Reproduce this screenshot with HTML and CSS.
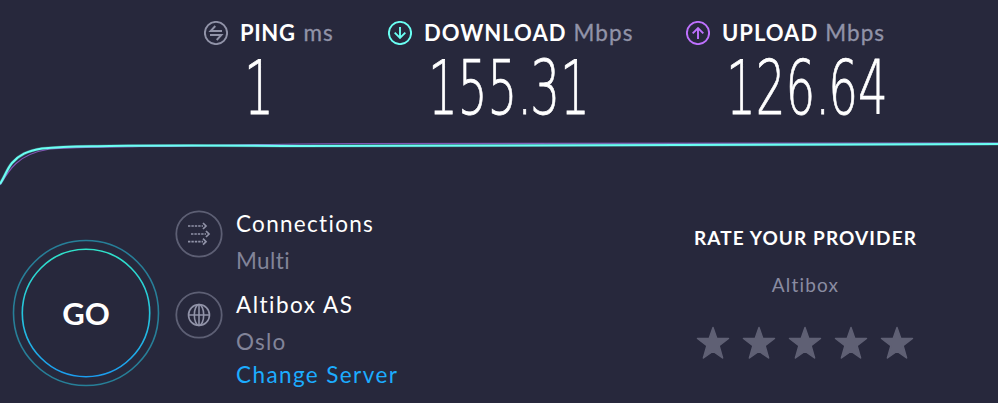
FILE: index.html
```html
<!DOCTYPE html>
<html lang="en">
<head>
<meta charset="utf-8">
<title>Speed test result</title>
<link rel="stylesheet" href="styles.css">
</head>
<body>
<main class="result">
  <header class="metrics">
    <section class="metric">
      <h2 class="metric-label"><svg class="metric-icon ping" viewBox="0 0 24 24"><circle cx="12" cy="12" r="11.1"/><path d="M18 10H6.6L11.3 5M6 14h11.4L12.7 19"/></svg><span class="metric-name ping-name">PING</span><span class="unit">ms</span></h2>
      <div class="value value-ping">1</div>
    </section>
    <section class="metric">
      <h2 class="metric-label"><svg class="metric-icon download" viewBox="0 0 24 24"><circle cx="12" cy="12" r="11.1"/><path d="M12 6v11M6.7 11.7L12 17l5.300-5.300"/></svg><span class="metric-name">DOWNLOAD</span><span class="unit">Mbps</span></h2>
      <div class="value">155<span class="dot">.</span>31</div>
    </section>
    <section class="metric">
      <h2 class="metric-label"><svg class="metric-icon upload" viewBox="0 0 24 24"><circle cx="12" cy="12" r="11.1"/><path d="M12 18V7M6.700 12.300L12 7l5.300 5.300"/></svg><span class="metric-name">UPLOAD</span><span class="unit">Mbps</span></h2>
      <div class="value">126<span class="dot">.</span>64</div>
    </section>
  </header>

  <svg class="graph" viewBox="0 0 998 70">
    <path class="line-upload" d="M0 55C6 45 10 39 16 33.500C24 26 34 21.500 50 19C75 16.500 100 17.500 140 16.500C220 16 270 13.500 355 13.500C500 13.500 700 14 998 13"/>
    <path class="line-glow" d="M0 54C5 46 7 39 12 33C19 25 27 21 42 18.500C65 16 80 16.500 110 16C180 15 230 15.500 300 16C400 16.500 650 16 998 14"/>
    <path class="line-download" d="M0 54C5 46 7 39 12 33C19 25 27 21 42 18.500C65 16 80 16.500 110 16C180 15 230 15.500 300 16C400 16.500 650 16 998 14"/>
  </svg>

  <div class="details">
    <button class="go" type="button">
      <svg class="go-ring" viewBox="0 0 148 148">
        <defs><linearGradient id="ring" x1="0" y1="0" x2="0" y2="1"><stop offset="0" stop-color="#30e3ca"/><stop offset=".5" stop-color="#25c5dc"/><stop offset="1" stop-color="#1b9df0"/></linearGradient></defs>
        <circle class="ring-outer" cx="74" cy="74" r="72.500"/>
        <circle cx="74" cy="74" r="63.700" stroke="url(#ring)"/>
      </svg>
      <span class="go-text">GO</span>
    </button>

    <div class="info">
      <section class="info-row">
        <svg class="info-icon" viewBox="0 0 48 48"><circle class="frame" cx="24" cy="24" r="22.700"/><path class="dash" d="M13 16h15M16 24h15M13 31.700h15"/><path class="arrows" d="M28 13l3 3-3 3M31 21l3 3-3 3M28 28.700l3 3-3 3"/></svg>
        <div><h3 class="info-title connections">Connections</h3><p class="info-sub multi">Multi</p></div>
      </section>
      <section class="info-row">
        <svg class="info-icon" viewBox="0 0 48 48"><circle class="frame" cx="24" cy="24" r="22.700"/><path class="globe" d="M13.500 24h21M24 13.500v21"/><circle class="globe" cx="24" cy="24" r="10.500"/><ellipse class="globe" cx="24" cy="24" rx="4.700" ry="10.500"/></svg>
        <div><h3 class="info-title provider">Altibox AS</h3><p class="info-sub city">Oslo</p><a class="change">Change Server</a></div>
      </section>
    </div>

    <aside class="rating">
      <h2 class="rating-title">RATE YOUR PROVIDER</h2>
      <p class="rating-name">Altibox</p>
      <div class="stars">
        <svg viewBox="0 0 34 34"><path d="M17 1.500l3.800 11h11.700l-9.400 7.200 3.500 12.300L17 25.200 7.400 32l3.500-12.300-9.400-7.200h11.700z"/></svg>
        <svg viewBox="0 0 34 34"><path d="M17 1.500l3.800 11h11.700l-9.400 7.200 3.500 12.300L17 25.200 7.400 32l3.500-12.300-9.400-7.200h11.700z"/></svg>
        <svg viewBox="0 0 34 34"><path d="M17 1.500l3.800 11h11.700l-9.400 7.200 3.500 12.300L17 25.200 7.400 32l3.500-12.300-9.400-7.200h11.700z"/></svg>
        <svg viewBox="0 0 34 34"><path d="M17 1.500l3.800 11h11.700l-9.400 7.200 3.500 12.300L17 25.200 7.400 32l3.500-12.300-9.400-7.200h11.700z"/></svg>
        <svg viewBox="0 0 34 34"><path d="M17 1.500l3.800 11h11.700l-9.400 7.200 3.500 12.300L17 25.200 7.400 32l3.500-12.300-9.400-7.200h11.700z"/></svg>
      </div>
    </aside>
  </div>
</main>
</body>
</html>
```
FILE: styles.css
```css
* { box-sizing: border-box; }
body {
  margin: 0;
  background: #27283c;
  color: #fff;
  font-family: Lato, "Liberation Sans", sans-serif;
  font-variant-ligatures: none;
}
h2, h3, p { margin: 0; font-weight: 400; }
svg { display: block; fill: none; }
.result { height: 403px; overflow: hidden; }

.metrics {
  display: grid;
  grid-template-columns: 184px 298px 1fr;
  height: 130px;
  padding: 18px 0 0 204px;
}
.metric-label {
  display: flex;
  align-items: center;
  height: 30px;
  font-size: 22px;
  line-height: 30px;
  white-space: nowrap;
}
.metric-icon { width: 24px; height: 24px; margin-right: 12px; stroke-width: 1.9; }
.ping { stroke: #9193a8; }
.download { stroke: #6afff3; }
.upload { stroke: #bf71ff; }
.metric-name { margin-right: 7px; font-weight: 700; letter-spacing: 1px; }
.ping-name { letter-spacing: 0.6px; margin-right: 8px; }
.unit { color: #9193a8; font-size: 22.5px; letter-spacing: 1.1px; -webkit-text-stroke: 0.3px #9193a8; }
.value {
  width: max-content;
  margin: 9px 0 0 39.500px;
  font-family: "DejaVu Sans", sans-serif;
  font-size: 75px;
  font-weight: 200;
  line-height: 62px;
  white-space: nowrap;
  transform: scaleX(0.624);
  transform-origin: 0 0;
  -webkit-text-stroke: 0.8px #fff;
}
.dot { letter-spacing: -3px; }

.graph { width: 998px; height: 70px; }
.line-upload { stroke: #8455b5; stroke-width: 1.2; }
.line-glow { stroke: #6afff3; stroke-opacity: 0.3; stroke-width: 3.2; }
.line-download { stroke: #6afff3; stroke-width: 2; }

.details {
  display: grid;
  grid-template-columns: 175px 487px 287px;
  height: 203px;
}
.go {
  display: grid;
  place-items: center;
  width: 148px;
  height: 148px;
  margin: 39px 0 0 12px;
  padding: 0;
  border: 0;
  background: none;
  color: #fff;
  font: 700 31px/40px Lato, sans-serif;
}
.go > * { grid-area: 1 / 1; }
.go-ring { width: 148px; height: 148px; stroke-width: 1.6; }
.ring-outer { stroke: #277f98; }

.info { display: flex; flex-direction: column; padding-top: 8px; }
.info-row { display: flex; gap: 13px; height: 81px; }
.info-icon { width: 48px; height: 48px; margin-top: 2px; }
.frame { stroke: #5d5f74; stroke-width: 1.8; }
.dash { stroke: #9193a8; stroke-width: 1.7; stroke-dasharray: 2.400 1; }
.arrows { stroke: #9193a8; stroke-width: 1.7; }
.globe { stroke: #9193a8; stroke-width: 1.6; }
.info-title, .info-sub, .change { font-size: 22.5px; line-height: 32px; letter-spacing: 1.3px; white-space: nowrap; }
.provider { letter-spacing: 1.500px; }
.info-sub { margin-top: 5px; color: #828499; letter-spacing: 0.400px; }
.city { letter-spacing: 1.200px; }
.change { display: block; margin-top: 1px; color: #1cacff; letter-spacing: 1.400px; }

.rating { display: flex; flex-direction: column; align-items: center; padding-top: 24px; }
.rating-title { font-size: 19px; font-weight: 700; line-height: 28px; letter-spacing: 1.100px; white-space: nowrap; }
.rating-name { margin-top: 19px; color: #8a8ca2; font-size: 19px; line-height: 28px; letter-spacing: 1.200px; }
.stars { display: flex; gap: 12px; margin: 26.500px 1px 0 0; }
.stars svg { width: 34px; height: 34px; fill: #5f6074; stroke: #5f6074; stroke-width: 1.5; stroke-linejoin: round; }
```
